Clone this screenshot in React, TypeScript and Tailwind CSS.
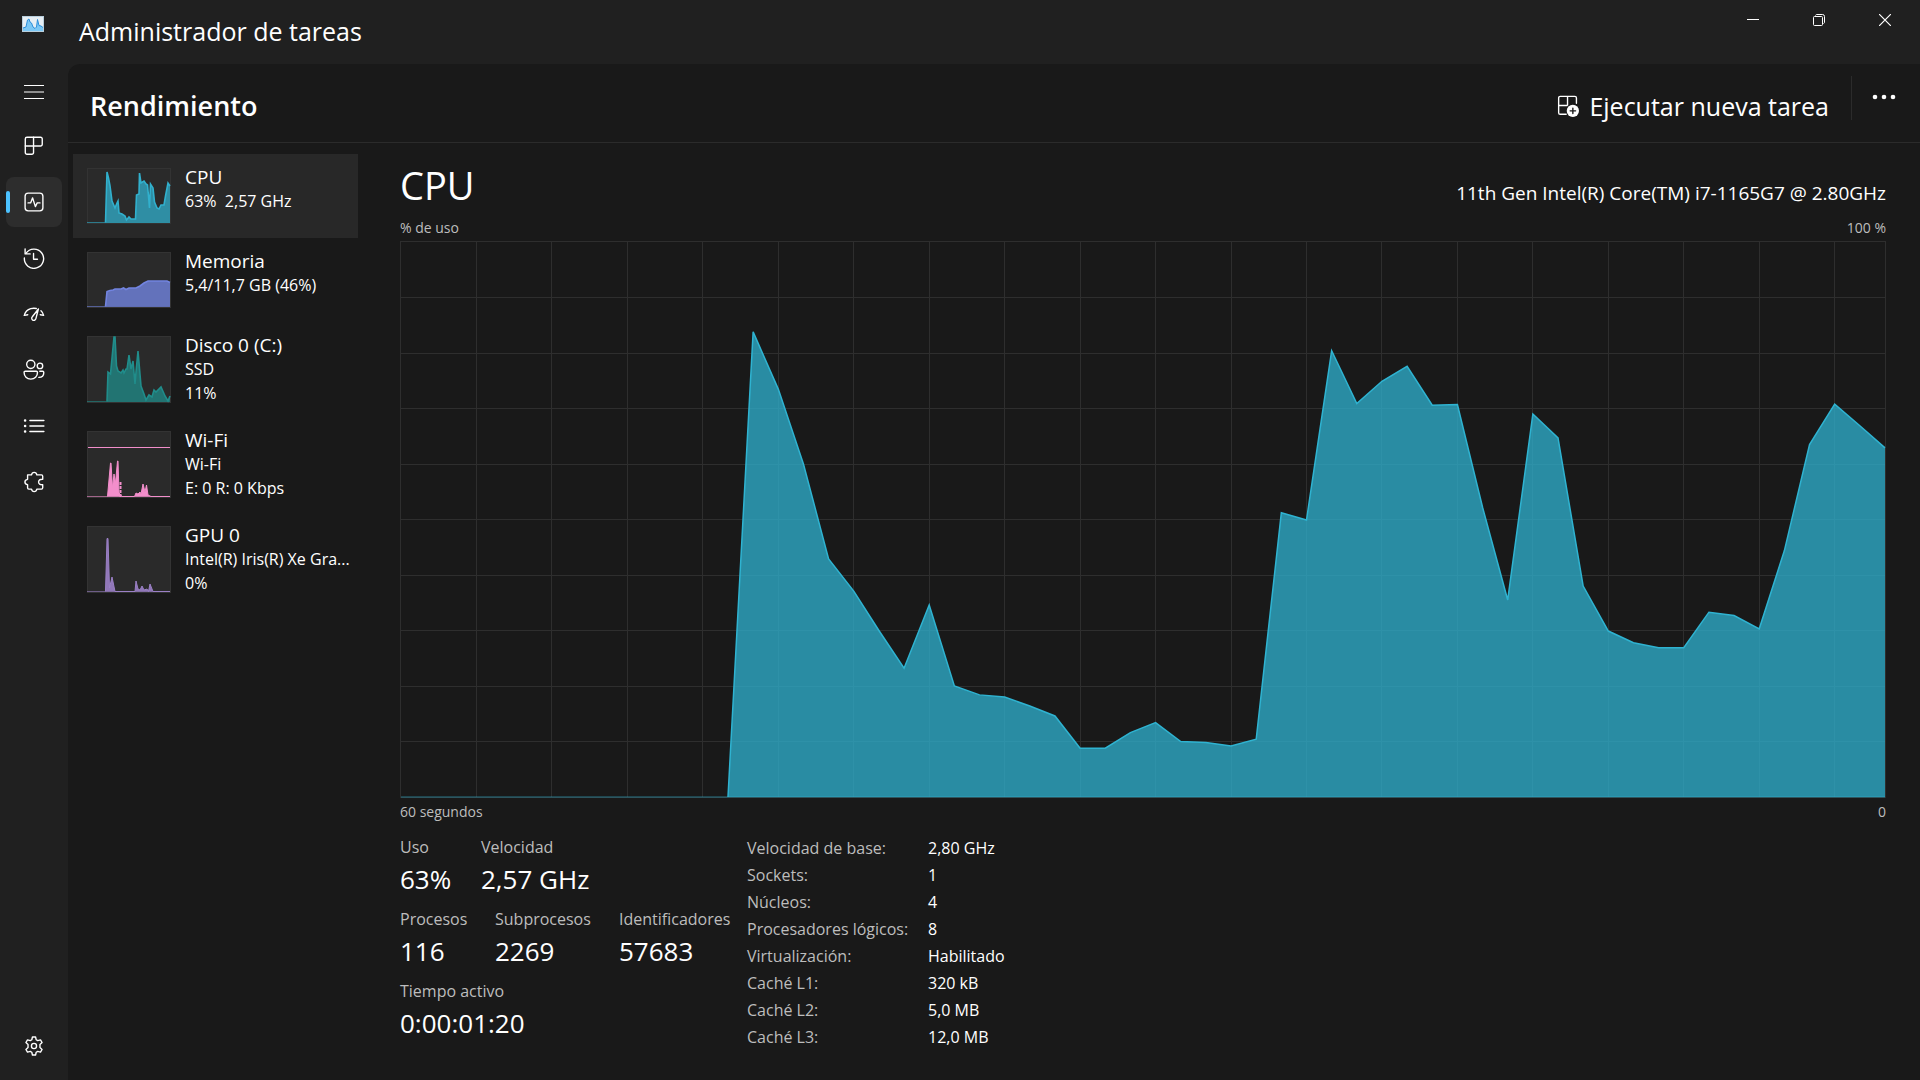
import type { ReactNode } from 'react'

// CPU usage in percent, one sample per second
const cpuSamples = [
  0, 0, 0, 0, 0, 0, 0, 0, 0, 0, 0, 0, 0, 0, 83.8, 73.5, 60, 42.9, 37.1, 30, 23.2,
  34.6, 20, 18.4, 18, 16.4, 14.6, 8.8, 8.8, 11.6, 13.4, 10, 9.8, 9.2, 10.4, 51.2,
  49.9, 80.4, 70.9, 74.9, 77.6, 70.6, 70.7, 52.2, 35.5, 69, 64.7, 38, 29.9, 27.8,
  26.9, 26.9, 33.3, 32.7, 30.3, 44.4, 63.5, 70.8, 66.9, 62.9,
]

const LAST = cpuSamples.length - 1
const FIRST_ACTIVE = cpuSamples.findIndex(v => v > 0) - 1
const cpuPoints = cpuSamples
  .map((v, i) => `${i * 10},${1000 - v * 10}`)
  .slice(FIRST_ACTIVE)
  .join(' ')

interface Resource {
  name: string
  lines: string[]
  height: number
  color: string
  fillOpacity: number
  points: string
  selected?: boolean
}

const resources: Resource[] = [
  {
    name: 'CPU',
    lines: ['63%  2,57 GHz'],
    height: 56,
    color: '#31b0cd',
    fillOpacity: 0.75,
    points:
      '0,54.5 18.5,54.5 20,4 21.5,10 23,18 25,33 28,40 30,35 31,33 32,45 35,46 38,48 39.5,52 42,49 44,51 48.5,51 49.5,27 52,26 52.5,5 54,15 57,13 59,16 60.5,17 62,34 62.5,40 63.5,16 66,20 67.5,34 70,40 72,41 74,37 77,37 78.5,28 81,15 83,18',
    selected: true,
  },
  {
    name: 'Memoria',
    lines: ['5,4/11,7 GB (46%)'],
    height: 56,
    color: '#7284e0',
    fillOpacity: 0.8,
    points:
      '0,54.5 18.5,54.5 20,39.5 23,38.5 26,38 28,37 34,37 36.5,36 39,37.5 42,36 49,36 53,34 57,31 61,29 80,29 83,30.5',
  },
  {
    name: 'Disco 0 (C:)',
    lines: ['SSD', '11%'],
    height: 67,
    color: '#208d8b',
    fillOpacity: 0.75,
    points:
      '0,65.5 20,65.5 21,36 23.5,38 27,1 28,1 29.5,30 31,35 34,37 36,34 37,37 39,33 40,33 42,19 44,33 46,25 48,48 49,36 51,15 54,50 57,58 59,64 62,59 65,61 67,54 69,56 74,51 78,60 81,65 83,60',
  },
  {
    name: 'Wi-Fi',
    lines: ['Wi-Fi', 'E: 0 R: 0 Kbps'],
    height: 67,
    color: '#f28ecb',
    fillOpacity: 1,
    points:
      '0,65.5 20.5,65.5 23.5,32 24,32 25.5,57 27,43 28.5,52 30.5,30 31,30 32,62 35,65.5 47.5,65.5 49,62 51,63 53,61 54,63 56,53 58,61 59.5,54 61,64 64,65.5 83,65.5',
  },
  {
    name: 'GPU 0',
    lines: ['Intel(R) Iris(R) Xe Gra...', '0%'],
    height: 67,
    color: '#9b80c6',
    fillOpacity: 0.9,
    points:
      '0,65.5 18.5,65.5 20,12.5 21,12.5 22.5,62 25,51 28,65.5 48,65.5 49,55 51,63 53,64 55,60 57,64 60,63 61.5,65.5 63,58 66,65.5 83,65.5',
  },
]

const specs = [
  ['Velocidad de base:', '2,80 GHz'],
  ['Sockets:', '1'],
  ['Núcleos:', '4'],
  ['Procesadores lógicos:', '8'],
  ['Virtualización:', 'Habilitado'],
  ['Caché L1:', '320 kB'],
  ['Caché L2:', '5,0 MB'],
  ['Caché L3:', '12,0 MB'],
]

function Icon({ children, size = 'size-6' }: { children: ReactNode; size?: string }) {
  return (
    <svg
      viewBox="0 0 24 24"
      className={size}
      fill="none"
      stroke="currentColor"
      strokeWidth="1.5"
      strokeLinecap="round"
      strokeLinejoin="round"
      aria-hidden="true"
    >
      {children}
    </svg>
  )
}

const navItems: { label: string; icon: ReactNode; active?: boolean }[] = [
  {
    label: 'Procesos',
    icon: (
      <>
        <path d="M4.3 2.5h14.900A1.800 1.800 0 0 1 21 4.300v5.900a1.800 1.800 0 0 1-1.800 1.800H2.500V4.300A1.800 1.800 0 0 1 4.300 2.500z" />
        <path d="M11.500 2.500v16.700a1.800 1.800 0 0 1-1.800 1.800H4.300a1.800 1.800 0 0 1-1.800-1.800V12" />
      </>
    ),
  },
  {
    label: 'Rendimiento',
    active: true,
    icon: (
      <>
        <rect x="2.3" y="2.3" width="19.4" height="19.4" rx="3.4" />
        <path d="M5.500 13h2.800l2.200-5.500 3 9.500 2-4h3" />
      </>
    ),
  },
  {
    label: 'Historial de aplicaciones',
    icon: (
      <>
        <path d="M3.200 7A10.500 10.500 0 1 1 1.500 12" />
        <path d="M2.300 2v5.500h5.500" />
        <path d="M11.500 7v6.300h4.300" />
      </>
    ),
  },
  {
    label: 'Aplicaciones de arranque',
    icon: (
      <>
        <path d="M1.500 13.500c.8-3.500 3.500-6.300 7-7.300 2-.6 4-.6 6-.2" />
        <path d="M1.500 13.500l3.700-.7M22.500 13.500l-3.700-.7M22.500 13.500c-.5-2-1.400-3.700-2.900-5" />
        <path d="M16.800 6.500L10.200 15a2.300 2.300 0 1 0 3.800 2.300z" />
      </>
    ),
  },
  {
    label: 'Usuarios',
    icon: (
      <>
        <circle cx="8.500" cy="5.800" r="4.500" />
        <circle cx="18.500" cy="7.500" r="3" />
        <path d="M2.500 13.300h12a1.300 1.300 0 0 1 1.300 1.300c0 4.300-3 7.400-7.300 7.400s-7.300-3.100-7.300-7.400a1.300 1.300 0 0 1 1.300-1.300z" />
        <path d="M18.300 13.300h3.100a1.300 1.300 0 0 1 1.300 1.300c0 3.200-2.200 5.400-5.500 5.400" />
      </>
    ),
  },
  {
    label: 'Detalles',
    icon: (
      <>
        <path d="M7.500 6H22.800M7.500 12H22.800M7.500 18H22.800" />
        <path d="M2.300 6h.01M2.300 12h.01M2.300 18h.01" strokeWidth="2.800" />
      </>
    ),
  },
  {
    label: 'Servicios',
    icon: (
      <path d="M5 4.200h4.300c.3-1.700 1.300-2.700 2.900-2.700s2.600 1 2.900 2.700h5a1.400 1.400 0 0 1 1.400 1.400v3.400c-3-.2-4.500 1.100-4.500 3s1.500 3.200 4.500 3v3.400a1.400 1.400 0 0 1-1.400 1.400h-5c-.3 1.700-1.300 2.700-2.900 2.700s-2.600-1-2.900-2.700H6.400A1.400 1.400 0 0 1 5 18.400v-3.500c-1.900-.3-2.900-1.300-2.900-2.900S3.100 9.400 5 9.100z" />
    ),
  },
]

function NavButton({ label, icon, active }: { label: string; icon: ReactNode; active?: boolean }) {
  return (
    <button
      aria-label={label}
      className={
        active
          ? 'relative flex h-[50px] w-14 items-center justify-center rounded-lg bg-[#2d2d2d]'
          : 'relative flex h-[50px] w-14 items-center justify-center rounded-lg hover:bg-[#2d2d2d]'
      }
    >
      {active && <span className="absolute left-0 h-[22px] w-1 rounded-full bg-[#4cc2ff]" />}
      <Icon size="size-[22px]">{icon}</Icon>
    </button>
  )
}

function TitleBar() {
  return (
    <header className="flex h-16 items-start justify-between">
      <div className="flex gap-[35px] pl-[22px]">
        <svg viewBox="0 0 22 16" className="mt-4 h-4 w-[22px]" aria-hidden="true">
          <rect width="22" height="16" fill="#b9cfdd" />
          <rect x="1" y="1" width="20" height="14" fill="#e6eef4" />
          <path
            d="M1 12l3-1 1.500-7L7 3l1 3 1.500 1L11 11l2 1.500L14.500 11 15.500 3.500l1.500 6 2 .5 2 1.500V15H1z"
            fill="#7cc8f5"
          />
          <path
            d="M1 12l3-1 1.500-7L7 3l1 3 1.500 1L11 11l2 1.500L14.500 11 15.500 3.500l1.500 6 2 .5 2 1.500"
            fill="none"
            stroke="#2b8fdb"
          />
        </svg>
        <h1 className="mt-[15px] text-[25px] leading-8">Administrador de tareas</h1>
      </div>
      <div className="flex pr-0.5">
        <button aria-label="Minimizar" className="flex h-10 w-[66px] items-center justify-center">
          <svg viewBox="0 0 12 12" className="size-3" stroke="currentColor">
            <path d="M0 5.500h12" />
          </svg>
        </button>
        <button aria-label="Restaurar" className="flex h-10 w-[66px] items-center justify-center">
          <svg viewBox="0 0 12 12" className="size-3" fill="none" stroke="currentColor">
            <rect x=".5" y="2.500" width="9" height="9" rx="1" />
            <path d="M2.500 1.500a1.500 1.500 0 0 1 1-1H9.500a2 2 0 0 1 2 2V8.500a1.500 1.500 0 0 1-1 1" />
          </svg>
        </button>
        <button aria-label="Cerrar" className="flex h-10 w-[66px] items-center justify-center">
          <svg viewBox="0 0 12 12" className="size-3" stroke="currentColor" strokeWidth="1.2">
            <path d="M0 0l12 12M12 0L0 12" />
          </svg>
        </button>
      </div>
    </header>
  )
}

function Thumbnail({ resource }: { resource: Resource }) {
  const { height, color, fillOpacity, points, name } = resource
  return (
    <svg width="84" height={height} viewBox={`0 0 84 ${height}`} className="shrink-0" aria-hidden="true">
      <rect x=".5" y=".5" width="83" height={height - 1} fill="#2a2a2a" stroke="#333333" />
      <polygon
        points={`${points} 83,${height - 1.5} 0,${height - 1.5}`}
        fill={color}
        fillOpacity={fillOpacity}
      />
      <path d={`M0 ${height - 1.5}h83`} stroke={color} strokeOpacity="0.6" />
      <polyline
        points={points.slice(points.indexOf(' ') + 1)}
        fill="none"
        stroke={color}
        strokeWidth={name === 'Wi-Fi' || name === 'GPU 0' ? 1 : 1.6}
      />
      {name === 'Wi-Fi' && (
        <>
          <path d="M1 16.500h82" stroke={color} />
          <path d="M33.500 51v15" stroke={color} strokeWidth="2" strokeDasharray="3 1" />
        </>
      )}
    </svg>
  )
}

function ResourceItem({ resource }: { resource: Resource }) {
  return (
    <button
      className={
        resource.selected
          ? 'flex gap-[14px] bg-[#282828] pt-[14px] pb-[14px] pl-[14px] text-left'
          : 'flex gap-[14px] pt-[14px] pb-[14px] pl-[14px] text-left'
      }
    >
      <Thumbnail resource={resource} />
      <span className="-mt-[3px] -mb-4 flex min-w-0 flex-col whitespace-pre">
        <span className="text-[19px] leading-6">{resource.name}</span>
        {resource.lines.map(line => (
          <span key={line} className="text-base leading-6">
            {line}
          </span>
        ))}
      </span>
    </button>
  )
}

function CpuChart() {
  const columns = Array.from({ length: 19 }, (_, i) => (i + 1) * 30)
  const rows = Array.from({ length: 9 }, (_, i) => (i + 1) * 100)
  return (
    <div className="min-h-0 flex-1 border border-[#2e2e2e]">
      <svg
        viewBox={`0 0 ${LAST * 10} 1000`}
        preserveAspectRatio="none"
        className="block size-full overflow-visible"
        role="img"
        aria-label="% de uso"
      >
        <g stroke="#2e2e2e" shapeRendering="crispEdges">
          {columns.map(x => (
            <line key={x} x1={x} y1="0" x2={x} y2="1000" vectorEffect="non-scaling-stroke" />
          ))}
          {rows.map(y => (
            <line key={y} x1="0" y1={y} x2={LAST * 10} y2={y} vectorEffect="non-scaling-stroke" />
          ))}
        </g>
        <polygon points={`${cpuPoints} ${LAST * 10},1000`} fill="#2fb3d1" fillOpacity="0.75" />
        <line
          x1="0"
          y1="1000"
          x2={LAST * 10}
          y2="1000"
          stroke="#2fb3d1"
          strokeOpacity="0.6"
          vectorEffect="non-scaling-stroke"
        />
        <polyline
          points={cpuPoints}
          fill="none"
          stroke="#2fb3d1"
          strokeWidth="1.5"
          vectorEffect="non-scaling-stroke"
        />
      </svg>
    </div>
  )
}

function Stat({ label, value }: { label: string; value: string }) {
  return (
    <div>
      <dt className="text-base leading-6 text-[#bdbdbd]">{label}</dt>
      <dd className="text-[26px] leading-10">{value}</dd>
    </div>
  )
}

function App() {
  return (
    <div className="flex h-screen flex-col overflow-hidden bg-[#202020] font-['Open_Sans','Noto_Sans',sans-serif] text-white">
      <TitleBar />
      <div className="flex min-h-0 flex-1">
        <nav className="flex w-[68px] shrink-0 flex-col items-center gap-1.5 pt-1 pb-[9px]">
          <button aria-label="Menú" className="flex h-[47px] w-14 items-center justify-center">
            <svg viewBox="0 0 20 16" className="h-4 w-5" stroke="currentColor">
              <path d="M0 1.500h20M0 8h20M0 14.500h20" />
            </svg>
          </button>
          {navItems.map(item => (
            <NavButton key={item.label} {...item} />
          ))}
          <div className="mt-auto">
            <NavButton
              label="Configuración"
              icon={
                <>
                  <circle cx="12" cy="12" r="2.800" />
                  <path d="M10.300 2.200h3.400l.7 3 1.700 1 3-.9 1.700 2.900-2.300 2.200v3.200l2.300 2.200-1.700 2.900-3-.9-1.700 1-.7 3h-3.400l-.7-3-1.700-1-3 .9-1.700-2.900 2.300-2.200v-3.200L3.200 8.200l1.700-2.900 3 .9 1.700-1z" />
                </>
              }
            />
          </div>
        </nav>

        <main className="flex min-w-0 flex-1 flex-col rounded-tl-xl bg-[#191919]">
          <div className="flex h-[79px] shrink-0 items-start justify-between border-b border-[#2b2b2b] pt-3 pr-2 pl-[22px]">
            <h2 className="mt-2.5 text-[27px] leading-10 font-semibold">Rendimiento</h2>
            <div className="flex items-start">
              <button className="mt-2.5 flex items-center gap-2.5 text-[25px] leading-10">
                <Icon size="size-[22px]">
                  <path d="M10 21H3.500A1.700 1.700 0 0 1 1.800 19.300V3.200A1.700 1.700 0 0 1 3.500 1.500h16a1.700 1.700 0 0 1 1.700 1.700V9M11.500 1.500v9.500M1.800 11.500H11" />
                  <circle cx="17.300" cy="17.300" r="6.700" fill="currentColor" stroke="none" />
                  <path d="M17.300 14.300v6M14.300 17.300h6" stroke="#191919" />
                </Icon>
                Ejecutar nueva tarea
              </button>
              <span className="ml-[22px] h-11 w-px bg-[#2b2b2b]" />
              <button aria-label="Más opciones" className="ml-1 flex h-[42px] w-14 items-center justify-center">
                <svg viewBox="0 0 24 6" className="h-1.5 w-6" fill="currentColor">
                  <circle cx="3" cy="3" r="2.300" />
                  <circle cx="12" cy="3" r="2.300" />
                  <circle cx="21" cy="3" r="2.300" />
                </svg>
              </button>
            </div>
          </div>

          <div className="flex min-h-0 flex-1">
            <div className="flex w-[290px] shrink-0 flex-col pt-[11px] pl-[5px]">
              {resources.map(resource => (
                <ResourceItem key={resource.name} resource={resource} />
              ))}
            </div>

            <section className="flex min-w-0 flex-1 flex-col pt-3 pr-[34px] pb-[29px] pl-[42px]">
              <div className="flex items-end justify-between">
                <h3 className="text-[38px] leading-[60px]">CPU</h3>
                <p className="text-[19px] leading-[44px]">11th Gen Intel(R) Core(TM) i7-1165G7 @ 2.80GHz</p>
              </div>
              <div className="flex h-[26px] items-center justify-between text-sm text-[#bdbdbd]">
                <span>% de uso</span>
                <span>100 %</span>
              </div>
              <CpuChart />
              <div className="flex h-7 items-center justify-between text-sm text-[#bdbdbd]">
                <span>60 segundos</span>
                <span>0</span>
              </div>

              <div className="mt-[9px] flex gap-4">
                <div className="flex flex-col gap-2">
                  <dl className="grid grid-cols-[81px_auto]">
                    <Stat label="Uso" value="63%" />
                    <Stat label="Velocidad" value="2,57 GHz" />
                  </dl>
                  <dl className="grid grid-cols-[95px_124px_112px]">
                    <Stat label="Procesos" value="116" />
                    <Stat label="Subprocesos" value="2269" />
                    <Stat label="Identificadores" value="57683" />
                  </dl>
                  <dl>
                    <Stat label="Tiempo activo" value="0:00:01:20" />
                  </dl>
                </div>
                <dl className="grid grid-cols-[181px_auto] content-start text-base leading-[27px]">
                  {specs.map(([label, value]) => (
                    <div key={label} className="contents">
                      <dt className="text-[#bdbdbd]">{label}</dt>
                      <dd>{value}</dd>
                    </div>
                  ))}
                </dl>
              </div>
            </section>
          </div>
        </main>
      </div>
    </div>
  )
}

export default App
